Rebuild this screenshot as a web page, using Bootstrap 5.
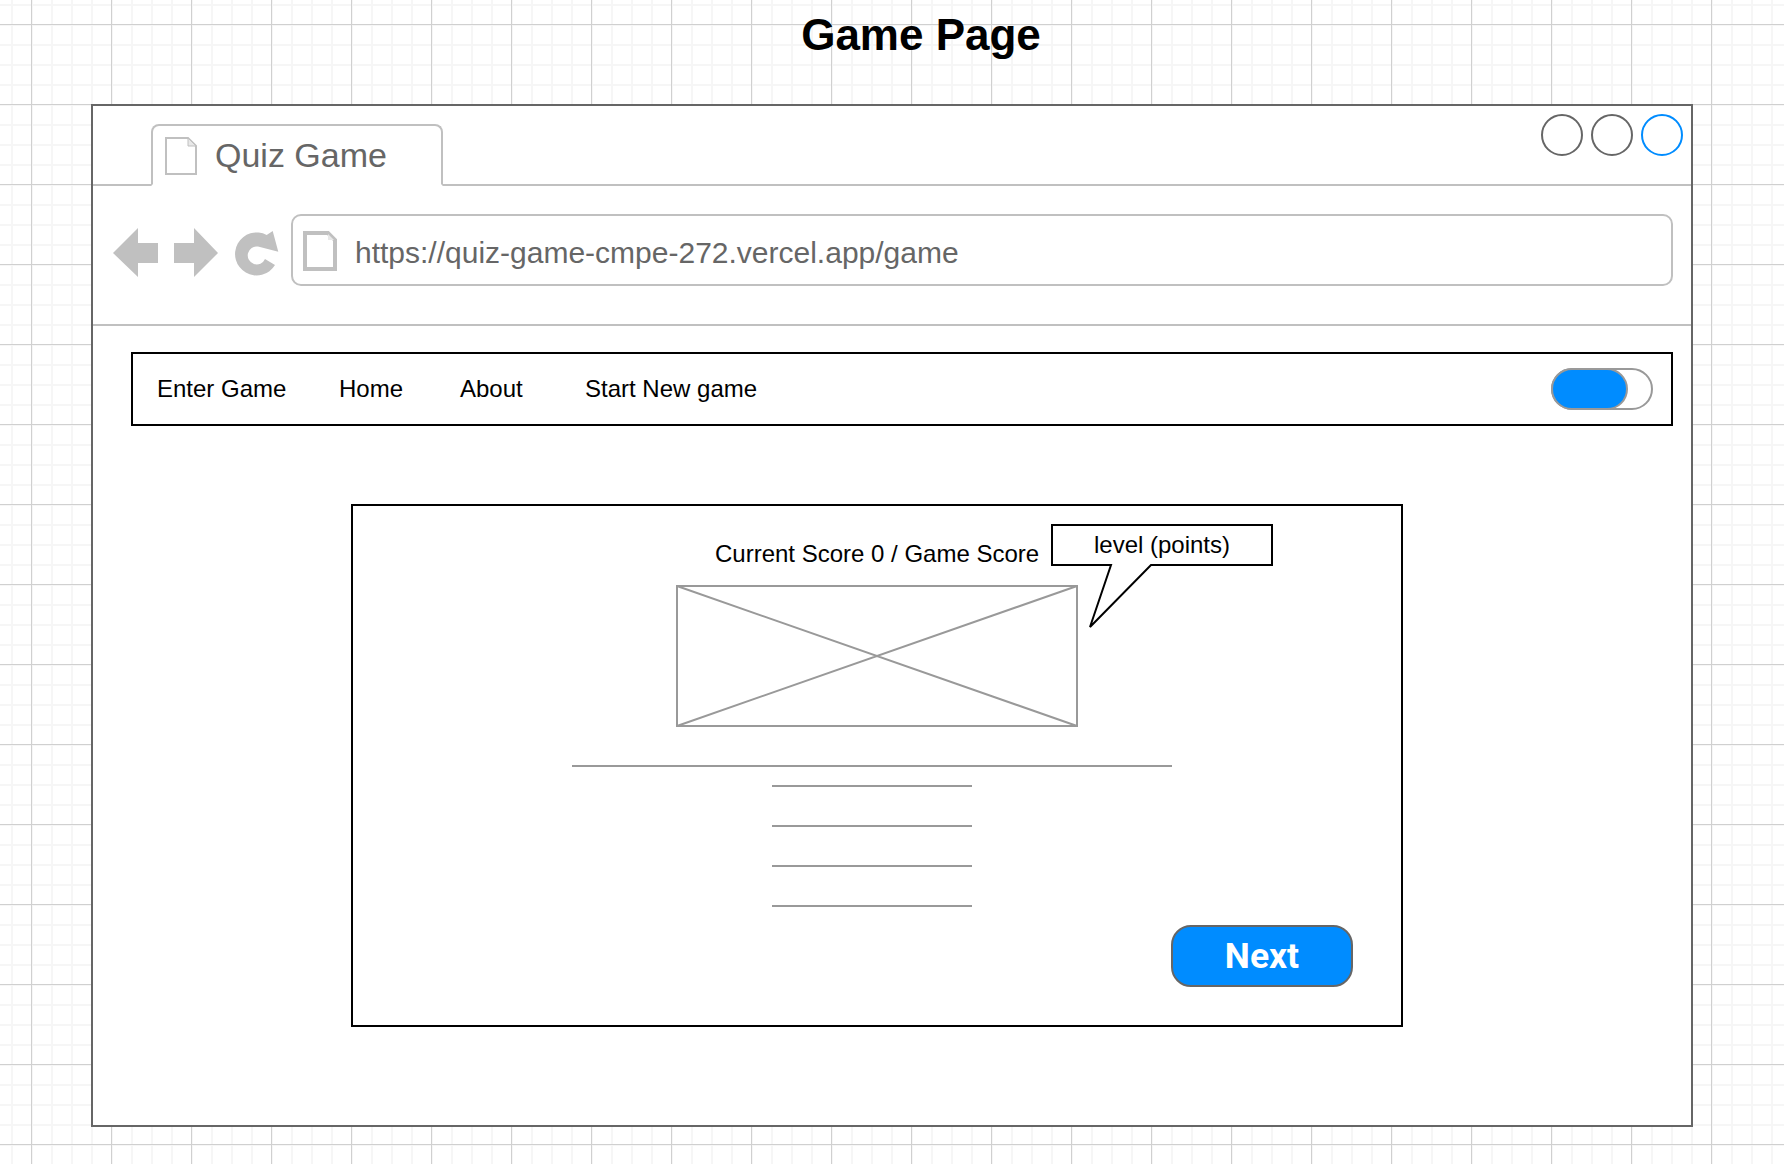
<!DOCTYPE html>
<html lang="en">
<head>
  <meta charset="UTF-8">
  <title>Game Page</title>
  <link href="https://cdn.jsdelivr.net/npm/bootstrap@5.3.0/dist/css/bootstrap.min.css" rel="stylesheet">
  <style>
    body {
      min-height: 1164px;
      font-family: "Liberation Sans", Arial, sans-serif;
      background-color: #fff;
      background-image:
        linear-gradient(#d0d0d0 1px, transparent 1px),
        linear-gradient(90deg, #d0d0d0 1px, transparent 1px),
        linear-gradient(#f6f6f6 2px, transparent 2px),
        linear-gradient(90deg, #f6f6f6 2px, transparent 2px);
      background-size: 80px 80px, 80px 80px, 20px 20px, 20px 20px;
      background-position: 0 24px, 31px 0, 0 4px, 11px 0;
    }
    .page-title {
      height: 104px;
      margin: 0;
      padding: 10px 0 0 58px;
      font-size: 44px;
      line-height: 50px;
      font-weight: 700;
      color: #000;
      text-align: center;
    }
    .browser-window {
      width: 1602px;
      height: 1023px;
      margin-left: 91px;
      border: 2px solid #666;
      background: #fff;
    }
    .tab-strip {
      height: 80px;
      padding: 18px 8px 0 58px;
      border-bottom: 2px solid #c0c0c0;
    }
    .browser-tab {
      width: 292px;
      height: 62px;
      margin-bottom: -2px;
      padding: 11px 0 0 12px;
      gap: 18px;
      border: 2px solid #c0c0c0;
      border-bottom-color: #fff;
      border-radius: 8px 8px 0 0;
      background: #fff;
      color: #666;
      font-size: 34px;
      line-height: 36px;
    }
    .win-dot {
      width: 42px;
      height: 42px;
      border: 2px solid #666;
      border-radius: 50%;
    }
    .win-dot-active { border-color: #008cff; }
    .win-dots { gap: 8px; margin-top: -10px; }
    .address-row {
      height: 140px;
      padding: 28px 18px 0 20px;
      border-bottom: 2px solid #c0c0c0;
    }
    .nav-glyphs { margin: 14px 12px 0 0; }
    .address-bar {
      height: 72px;
      padding: 15px 10px;
      gap: 18px;
      border: 2px solid #c0c0c0;
      border-radius: 10px;
      color: #666;
      font-size: 30px;
      line-height: 36px;
    }
    .address-text { margin-top: 4px; }
    .main-area { padding: 26px 18px 0 38px; }
    .site-nav {
      height: 74px;
      padding: 0 18px 0 24px;
      border: 2px solid #000;
      color: #000;
      font-size: 24px;
    }
    .nav-one { width: 154px; }
    .nav-two { width: 121px; margin-left: 28px; }
    .nav-three { width: 125px; }
    .toggle-track {
      width: 102px;
      height: 42px;
      border: 2px solid #999;
      border-radius: 21px;
      position: relative;
    }
    .toggle-fill {
      position: absolute;
      top: -2px;
      left: -2px;
      width: 77px;
      height: 42px;
      border: 2px solid #999;
      border-radius: 21px;
      background: #008cff;
    }
    .game-panel {
      width: 1052px;
      height: 523px;
      margin: 78px 0 0 220px;
      padding-top: 33px;
      position: relative;
      border: 2px solid #000;
      color: #000;
      font-size: 24px;
    }
    .score-text {
      padding-left: 362px;
      line-height: 30px;
      height: 30px;
    }
    .image-holder {
      display: block;
      width: 402px;
      height: 142px;
      margin: 16px 0 0 323px;
    }
    .long-rule, .short-rule { height: 2px; background: #999; }
    .long-rule { width: 600px; margin: 38px 0 0 219px; }
    .short-rule { width: 200px; margin: 18px 0 0 419px; }
    .short-rule + .short-rule { margin-top: 38px; }
    .next-btn {
      display: block;
      width: 182px;
      height: 62px;
      margin: 18px 0 0 818px;
      padding: 2px 0 0;
      border: 2px solid #666;
      border-radius: 20px;
      background: #008cff;
      color: #fff;
      font-family: Roboto, "Liberation Sans", sans-serif;
      font-size: 35.5px;
      font-weight: 700;
    }
    .level-callout {
      position: absolute;
      left: 698px;
      top: 18px;
    }
    .level-text {
      position: absolute;
      left: 698px;
      top: 23px;
      width: 222px;
      text-align: center;
      line-height: 32px;
    }
  </style>
</head>
<body>

  <h1 class="page-title">Game Page</h1>

  <div class="browser-window">
    <!-- Tab strip -->
    <div class="tab-strip d-flex justify-content-between align-items-start">
      <div class="browser-tab d-flex align-items-start">
        <svg width="32" height="38" viewBox="0 0 32 38" class="flex-shrink-0">
          <path d="M1 1H23L31 9V37H1Z" fill="#fff" stroke="#c0c0c0" stroke-width="2"/>
          <path d="M23 1V9H31Z" fill="#e8e8e8" stroke="#c0c0c0" stroke-width="1"/>
        </svg>
        <span>Quiz Game</span>
      </div>
      <div class="win-dots d-flex">
        <div class="win-dot"></div>
        <div class="win-dot"></div>
        <div class="win-dot win-dot-active"></div>
      </div>
    </div>

    <!-- Address row -->
    <div class="address-row d-flex align-items-start">
      <svg width="166" height="50" viewBox="0 0 166 50" class="nav-glyphs flex-shrink-0">
        <path d="M0 25L25 0V15H45V35H25V49Z" fill="#c0c0c0"/>
        <path d="M61 15H81V0L105 25L81 49V35H61Z" fill="#c0c0c0"/>
        <path d="M162 37A21.5 21.5 0 1 1 153.7 7L159.7 3L165.3 23.7L145 18.5A9 9 0 1 0 152 31Z" fill="#c0c0c0"/>
      </svg>
      <div class="address-bar flex-grow-1 d-flex align-items-start">
        <svg width="34" height="40" viewBox="0 0 34 40" class="flex-shrink-0">
          <path d="M2 2H25L32 9V38H2Z" fill="#fff" stroke="#c0c0c0" stroke-width="4"/>
          <path d="M25 3V9H31Z" fill="#e8e8e8"/>
        </svg>
        <span class="address-text">https://quiz-game-cmpe-272.vercel.app/game</span>
      </div>
    </div>

    <div class="main-area">
      <!-- Site nav -->
      <div class="site-nav d-flex align-items-center">
        <span class="nav-one">Enter Game</span>
        <span class="nav-two">Home</span>
        <span class="nav-three">About</span>
        <span class="flex-grow-1">Start New game</span>
        <div class="toggle-track flex-shrink-0"><div class="toggle-fill"></div></div>
      </div>

      <!-- Game panel -->
      <div class="game-panel">
        <div class="score-text">Current Score 0 / Game Score</div>
        <svg class="image-holder" viewBox="0 0 402 142">
          <rect x="1" y="1" width="400" height="140" fill="#fff" stroke="#999" stroke-width="2"/>
          <path d="M1 1L401 141M401 1L1 141" stroke="#999" stroke-width="2" fill="none"/>
        </svg>
        <div class="long-rule"></div>
        <div class="short-rule"></div>
        <div class="short-rule"></div>
        <div class="short-rule"></div>
        <div class="short-rule"></div>
        <button class="next-btn" type="button">Next</button>

        <svg class="level-callout" width="222" height="106" viewBox="0 0 222 106">
          <path d="M1 1H221V41H100L39 103L60 41H1Z" fill="#fff" stroke="#000" stroke-width="2"/>
        </svg>
        <div class="level-text">level (points)</div>
      </div>
    </div>
  </div>

  <script src="https://cdn.jsdelivr.net/npm/bootstrap@5.3.0/dist/js/bootstrap.bundle.min.js"></script>
</body>
</html>
